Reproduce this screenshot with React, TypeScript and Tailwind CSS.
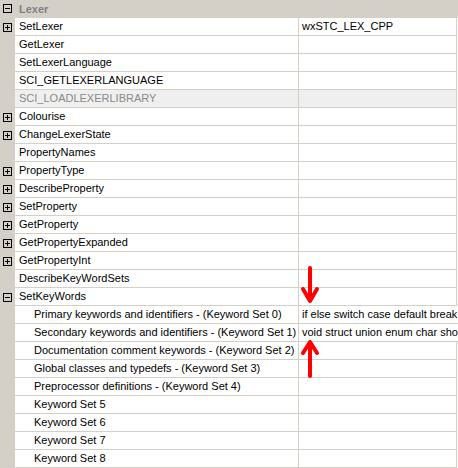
type Row = {
  name: string
  value?: string
  box?: '+' | '-'
  sub?: boolean
  disabled?: boolean
}

const rows: Row[] = [
  { name: 'SetLexer', box: '+', value: 'wxSTC_LEX_CPP' },
  { name: 'GetLexer' },
  { name: 'SetLexerLanguage' },
  { name: 'SCI_GETLEXERLANGUAGE' },
  { name: 'SCI_LOADLEXERLIBRARY', disabled: true },
  { name: 'Colourise', box: '+' },
  { name: 'ChangeLexerState', box: '+' },
  { name: 'PropertyNames' },
  { name: 'PropertyType', box: '+' },
  { name: 'DescribeProperty', box: '+' },
  { name: 'SetProperty', box: '+' },
  { name: 'GetProperty', box: '+' },
  { name: 'GetPropertyExpanded', box: '+' },
  { name: 'GetPropertyInt', box: '+' },
  { name: 'DescribeKeyWordSets' },
  { name: 'SetKeyWords', box: '-' },
  { name: 'Primary keywords and identifiers - (Keyword Set 0)', sub: true, value: 'if else switch case default break goto return for while do continue' },
  { name: 'Secondary keywords and identifiers - (Keyword Set 1)', sub: true, value: 'void struct union enum char short int long double float' },
  { name: 'Documentation comment keywords - (Keyword Set 2)', sub: true },
  { name: 'Global classes and typedefs - (Keyword Set 3)', sub: true },
  { name: 'Preprocessor definitions - (Keyword Set 4)', sub: true },
  { name: 'Keyword Set 5', sub: true },
  { name: 'Keyword Set 6', sub: true },
  { name: 'Keyword Set 7', sub: true },
  { name: 'Keyword Set 8', sub: true },
]

function Expander({ kind }: { kind: '+' | '-' }) {
  return (
    <svg width="9" height="9" viewBox="0 0 9 9" className="block">
      <rect x="0.5" y="0.5" width="8" height="8" fill="none" stroke="#000" />
      <line x1="2" y1="4.5" x2="7" y2="4.5" stroke="#000" />
      {kind === '+' && <line x1="4.5" y1="2" x2="4.5" y2="7" stroke="#000" />}
    </svg>
  )
}

export default function App() {
  return (
    <div className="relative w-[458px] h-[468px] bg-white overflow-hidden text-[11px] leading-[17px] text-black" style={{ fontFamily: '"Liberation Sans", Arial, sans-serif' }}>
      <div className="flex h-[18px] bg-[#d4d0c8]">
        <div className="w-[15px] pl-[3px] pt-[4px]">
          <Expander kind="-" />
        </div>
        <div className="pl-[4px] font-bold text-[#808080] leading-[18px]">Lexer</div>
      </div>
      {rows.map((r) => (
        <div key={r.name} className="flex h-[18px] w-[457px]">
          <div className="w-[15px] shrink-0 bg-[#d4d0c8] pl-[3px] pt-[5px]">
            {r.box && <Expander kind={r.box} />}
          </div>
          <div className={`flex flex-1 border-b border-[#d4d0c8] ${r.disabled ? 'bg-[#efefef] text-[#8a8a8a]' : ''}`}>
            <div className={`w-[284px] shrink-0 border-r border-[#d4d0c8] whitespace-nowrap overflow-hidden ${r.sub ? 'pl-[19px]' : 'pl-[4px]'}`}>
              {r.name}
            </div>
            <div className="flex-1 min-w-0 pl-[3px] whitespace-nowrap overflow-hidden border-r border-[#d4d0c8]">
              {r.value}
            </div>
          </div>
        </div>
      ))}
      <svg className="absolute left-0 top-0 pointer-events-none" width="458" height="468">
        <g stroke="#ff0000" strokeWidth="4" strokeLinecap="round" strokeLinejoin="round" fill="none">
          <line x1="310" y1="268" x2="310" y2="300" />
          <polyline points="303,289 310,301 317,289" />
          <line x1="310" y1="343" x2="310" y2="376" />
          <polyline points="303,353 310,342 317,353" />
        </g>
      </svg>
    </div>
  )
}
